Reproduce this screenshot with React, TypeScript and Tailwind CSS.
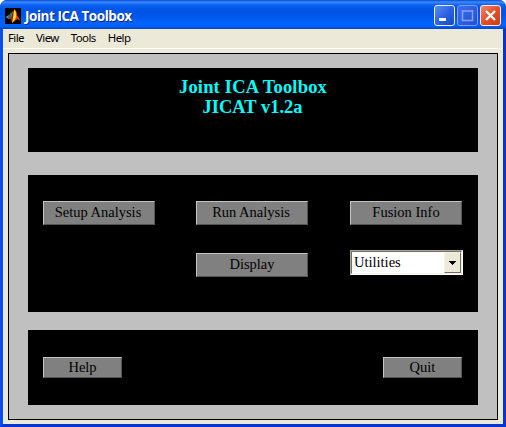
import type { ReactNode } from 'react';

function MatlabIcon() {
  return (
    <svg width="16" height="16" viewBox="0 0 16 16" className="shrink-0">
      <rect width="16" height="16" fill="#050302" />
      <path d="M0.5 9 L4 7 L8.5 2.5 L6.8 9 L4 11.3Z" fill="#568a92" />
      <path d="M4 7.2 L7 5 L6 9 L4 11 L2.5 10Z" fill="#3d626a" />
      <path d="M4 11 L6.2 9 L8.6 2 L9.6 1 L8.8 11 L7 14 L6 11.5Z" fill="#a81f08" />
      <path d="M9.3 1 L11 2.6 L12.6 8 L15.6 13 L12.5 11 L10 12.7 L7 15.3 L8 10Z" fill="#f03a10" />
      <path d="M9.2 2 L10.7 3.4 L11.2 8.5 L9.8 12 L7 14.8 L8 10Z" fill="#ffe32b" />
    </svg>
  );
}

function CaptionButton({ kind }: { kind: 'min' | 'max' | 'close' }) {
  const look = {
    min: 'border-[#e8effd] bg-linear-to-br from-[#5b8df4] via-[#2d62e3] to-[#1847c8]',
    max: 'border-[#7d9cef] bg-linear-to-br from-[#3b70ee] to-[#1d50d8]',
    close: 'border-[#fbeae4] bg-linear-to-br from-[#ed8464] via-[#e2502a] to-[#c93c12]',
  }[kind];
  return (
    <button className={`flex h-[21px] w-[21px] items-center justify-center rounded-[3px] border ${look}`}>
      <svg width="19" height="19" viewBox="0 0 19 19" fill="none">
        {kind === 'min' && <path d="M4 13.5H11" stroke="#fff" strokeWidth="3" />}
        {kind === 'max' && <path d="M4.5 4v10.5h10V4M4 5H15" stroke="#8d9fec" strokeWidth="1.5" />}
        {kind === 'close' && <path d="M5 5L14 14M14 5L5 14" stroke="#fff" strokeWidth="2.4" />}
      </svg>
    </button>
  );
}

function Push({ children, className }: { children: ReactNode; className: string }) {
  return (
    <button
      className={`flex items-center justify-center border border-t-[#c4c4c4] border-r-[#555] border-b-[#555] border-l-[#c4c4c4] bg-[#808080] pb-px text-[14.5px] leading-none whitespace-nowrap text-black ${className}`}
    >
      {children}
    </button>
  );
}

export default function App() {
  return (
    <div className="h-[427px] w-[506px] overflow-hidden bg-white">
      <div className="flex h-full flex-col overflow-hidden rounded-t-[7px] bg-[#0842e0]">
        <header className="flex h-[29px] shrink-0 items-center bg-[linear-gradient(#0a48d0_0,#3b8bff_2px,#0c62f0_5px,#0055e5_9px,#0055e8_15px,#0263fc_23px,#0262f8_26px,#0045cc_29px)] pt-[2px] pr-[5px] pl-[5px]">
          <MatlabIcon />
          <h1 className="ml-1 grow pt-[3px] font-['Open_Sans',sans-serif] text-[13.5px] leading-none font-bold tracking-[-0.46px] whitespace-nowrap text-white [text-shadow:1px_1px_#0a2a8c]">
            Joint ICA Toolbox
          </h1>
          <div className="flex gap-[2px]">
            <CaptionButton kind="min" />
            <CaptionButton kind="max" />
            <CaptionButton kind="close" />
          </div>
        </header>

        <div className="flex min-h-0 grow flex-col border-x-[3px] border-b-[3px] border-r-[#0636d0] border-b-[#0636d0] border-l-[#0a50ee] bg-[#ece9d8]">
          <nav className="flex h-5 shrink-0 items-center gap-[12px] border-b border-white pb-px pl-[5px] font-['Noto_Sans',sans-serif] text-[11.5px] leading-none tracking-[-0.6px] text-black">
            <span>File</span>
            <span>View</span>
            <span>Tools</span>
            <span>Help</span>
          </nav>

          <main className="mx-[5px] mt-[4px] mb-[4px] flex grow flex-col border border-black bg-[#c0c0c0] px-[19px] pt-[14px] font-['Liberation_Serif',serif]">
            <section className="h-[84px] bg-black pt-[9px] text-center text-[18.5px] leading-[20px] font-bold text-[#00ffff]">
              <p className="tracking-[0.18px]">Joint ICA Toolbox</p>
              <p className="pr-px">JICAT v1.2a</p>
            </section>

            <section className="mt-[23px] h-[137px] bg-black pt-[26px] pr-[15px] pl-[15px]">
              <div className="flex">
                <Push className="h-6 w-28 pr-[2px]">Setup Analysis</Push>
                <Push className="ml-[41px] h-6 w-28 pr-[2px]">Run Analysis</Push>
                <Push className="ml-[42px] h-6 w-28">Fusion Info</Push>
              </div>
              <div className="mt-[25px] flex items-start">
                <Push className="mt-[3px] ml-[153px] h-6 w-28">Display</Push>
                <div className="ml-[42px] flex h-[25px] w-[113px] shrink-0 border border-t-[#aca899] border-r-white border-b-white border-l-[#aca899] bg-white">
                  <div className="flex grow border border-t-[#716f64] border-r-[#f1efe2] border-b-[#f1efe2] border-l-[#716f64]">
                    <span className="grow pt-[2px] pl-[2px] text-[14.5px] leading-[17px] text-black">Utilities</span>
                    <span className="flex w-[17px] items-center justify-center border border-t-[#f5f3e8] border-r-[#716f64] border-b-[#716f64] border-l-[#f5f3e8] bg-[#ece9d8]">
                      <svg width="7" height="4" viewBox="0 0 7 4" shapeRendering="crispEdges">
                        <path d="M0 0H7L3.5 4Z" fill="#000" />
                      </svg>
                    </span>
                  </div>
                </div>
              </div>
            </section>

            <section className="mt-[18px] flex h-[75px] items-start justify-between bg-black px-[15px] pt-[27px]">
              <Push className="h-[21px] w-[79px]">Help</Push>
              <Push className="mr-px h-[21px] w-[79px]">Quit</Push>
            </section>
          </main>
        </div>
      </div>
    </div>
  );
}
